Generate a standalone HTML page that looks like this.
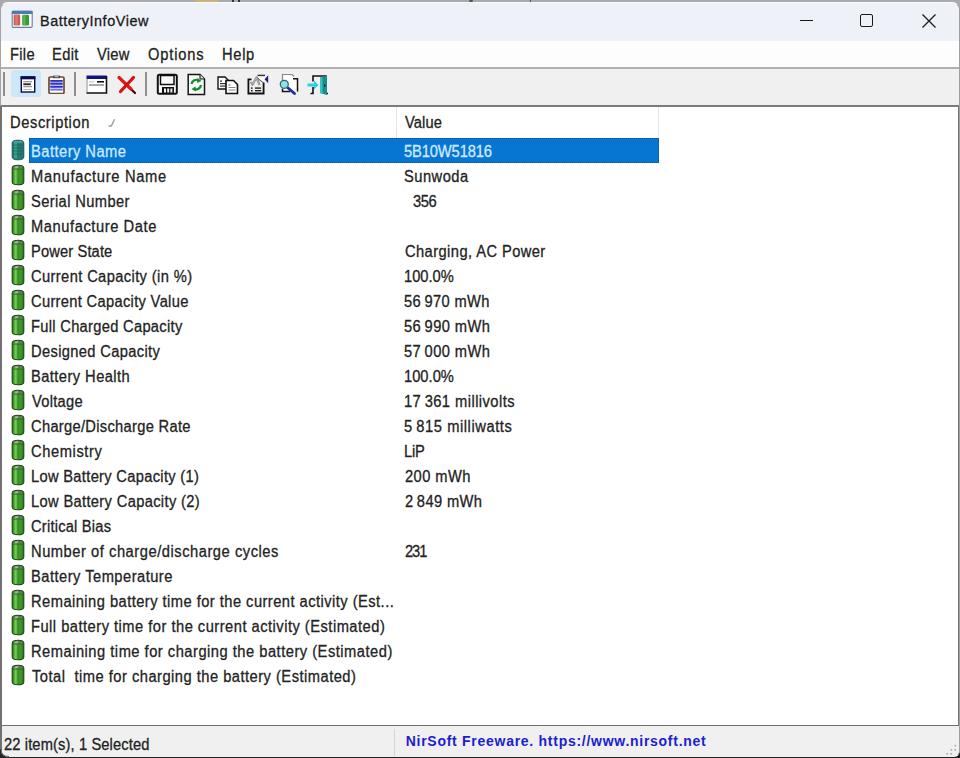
<!DOCTYPE html>
<html><head><meta charset="utf-8">
<style>
*{margin:0;padding:0;box-sizing:border-box}
html,body{width:960px;height:758px;overflow:hidden;background:#202020}
body{font-family:"Liberation Sans",sans-serif;position:relative}
.abs{position:absolute;display:block}
.t{position:absolute;white-space:pre;line-height:24px;font-family:"Liberation Sans",sans-serif;-webkit-text-stroke:0.3px currentColor}
</style></head><body>
<!-- desktop strip top -->
<div class="abs" style="left:0;top:0;width:960px;height:20px;background:#a9aaad"></div>
<div class="abs" style="left:195px;top:0;width:24px;height:2px;background:#c8b47a;border-radius:2px"></div>
<div class="abs" style="left:232px;top:0;width:2px;height:2px;background:#333"></div>
<div class="abs" style="left:238px;top:0;width:2px;height:2px;background:#333"></div>
<div class="abs" style="left:469px;top:0;width:4px;height:2px;background:#555;border-radius:2px"></div>
<div class="abs" style="left:530px;top:0;width:1px;height:2px;background:#555"></div>
<!-- window -->
<div class="abs" style="left:0;top:2px;width:960px;height:755px;background:#f0f0f0;border-radius:8px 8px 6px 6px;overflow:hidden;border:1px solid #9a9aa2;border-top-color:#fbfbfd;border-left-color:#a4a4a8;border-right-color:#a0a0a0;border-bottom-color:#f0f0f0">
  <div class="abs" style="left:0;top:0;width:958px;height:38px;background:#eef1f8"></div>
  <div class="abs" style="left:0;top:38px;width:958px;height:27px;background:#fdfdfd"></div>
  <div class="abs" style="left:0;top:64px;width:958px;height:2px;background:#b0b0b0"></div>
  <div class="abs" style="left:0;top:66px;width:958px;height:37px;background:#f0f0f0"></div>
  <div class="abs" style="left:0;top:102px;width:958px;height:2px;background:#7c7c7c"></div>
  <!-- list -->
  <div class="abs" style="left:0;top:104px;width:958px;height:619px;background:#fff;border-left:1px solid #707070;border-right:1px solid #777;border-bottom:1px solid #6e6e6e"></div>
  <!-- status -->
  <div class="abs" style="left:393px;top:726px;width:1px;height:30px;background:#d6d6d6"></div>
</div>
<div class="abs" style="left:0;top:106px;width:2px;height:645px;background:#717171"></div>
<svg class="abs" style="left:0;top:749px" width="9" height="9" viewBox="0 0 9 9"><path d="M0 0 L0 9 L9 9 L9 8 Q1 8 1 0 Z" fill="#262626"/><path d="M1 0 Q1 7.5 9 7.5" stroke="#6a6a6a" stroke-width="1" fill="none"/></svg>
<!-- header dividers -->
<div class="abs" style="left:396px;top:107px;width:1px;height:31px;background:#e5e5e5"></div>
<div class="abs" style="left:658px;top:107px;width:1px;height:31px;background:#e5e5e5"></div>
<!-- sort arrow -->
<svg class="abs" style="left:106px;top:117px" width="12" height="12" viewBox="0 0 12 12"><path d="M2.5 9 L5.3 9 L8.6 2.3" stroke="#9c9c9c" stroke-width="1.4" fill="none"/></svg>
<!-- selection -->
<div class="abs" style="left:29px;top:138px;width:630px;height:25px;background:#0676d2;outline:1px dotted #0a4f98;outline-offset:-1px"></div>

<!-- title icon -->
<svg class="abs" style="left:11px;top:10px" width="23" height="19" viewBox="0 0 23 19">
<rect x="1.2" y="1.4" width="20" height="16" rx="1.2" fill="#fbfbfb" stroke="#66809f" stroke-width="1.1"/>
<rect x="0.8" y="0.8" width="20.8" height="3.2" rx="1" fill="#4c7bb0"/>
<rect x="2.6" y="4.6" width="6.6" height="10.8" rx="1.2" fill="#cf5c55"/>
<rect x="4.2" y="5" width="2.5" height="10" fill="#dc7a70"/>
<rect x="11.2" y="4.8" width="6.8" height="10.6" rx="1.2" fill="#3a9a36"/>
<rect x="12.2" y="5" width="2.2" height="10" fill="#5ab850"/>
</svg>
<!-- caption buttons -->
<div class="abs" style="left:800px;top:20px;width:13px;height:1px;background:#1a1a1a"></div>
<div class="abs" style="left:860px;top:14px;width:13px;height:13px;border:1.7px solid #1a1a1a;border-radius:2px"></div>
<svg class="abs" style="left:921px;top:13px" width="16" height="16" viewBox="0 0 16 16"><path d="M1.5 1.5 L14.5 14.5 M14.5 1.5 L1.5 14.5" stroke="#1a1a1a" stroke-width="1.3"/></svg>

<!-- toolbar -->
<div class="abs" style="left:3px;top:72px;width:2px;height:24px;background:#8e8e8e"></div>
<div class="abs" style="left:11px;top:70px;width:30px;height:27px;background:#cce6fa;border-radius:3px"></div>
<div class="abs" style="left:74px;top:72px;width:2px;height:24px;background:#8e8e8e"></div>
<div class="abs" style="left:145px;top:72px;width:2px;height:24px;background:#8e8e8e"></div>
<!-- icon1 properties -->
<svg class="abs" style="left:20px;top:76px" width="16" height="17" viewBox="0 0 16 17">
<rect x="1.3" y="1" width="13.4" height="15" fill="#fff" stroke="#0a0a48" stroke-width="1.4"/>
<rect x="0.6" y="0.3" width="14.8" height="3" fill="#0a0a50"/>
<rect x="3.3" y="5.3" width="8.7" height="0.9" fill="#707070"/>
<rect x="3.3" y="7.3" width="7.5" height="1.9" fill="#2a2a2a"/>
<rect x="3.3" y="10.3" width="8.7" height="0.9" fill="#707070"/>
<rect x="3.3" y="13" width="8" height="0.9" fill="#b0b0b0"/>
</svg>
<!-- icon2 clipboard -->
<svg class="abs" style="left:48px;top:75px" width="17" height="19" viewBox="0 0 17 19">
<rect x="1" y="2" width="15" height="16.5" rx="1.2" fill="#fff" stroke="#6e4c2c" stroke-width="1.7"/>
<rect x="5" y="0.6" width="7" height="2.6" fill="#4a4a4a"/>
<rect x="6.5" y="1.2" width="4" height="1" fill="#ccc"/>
<rect x="2.3" y="5.2" width="12.4" height="2.4" fill="#5858e0"/>
<rect x="2.3" y="5.2" width="12.4" height="0.9" fill="#22229a"/>
<rect x="2.3" y="8.2" width="12.4" height="2.2" fill="#5a5ae6"/>
<rect x="2.3" y="8.2" width="12.4" height="0.8" fill="#2a2aa8"/>
<rect x="2.3" y="11" width="12.4" height="2.2" fill="#5a5ae6"/>
<rect x="2.3" y="11" width="12.4" height="0.8" fill="#2a2aa8"/>
<rect x="2.3" y="13.8" width="12.4" height="1.8" fill="#7070f0"/>
</svg>
<!-- icon3 window -->
<svg class="abs" style="left:86px;top:75px" width="22" height="19" viewBox="0 0 22 19">
<rect x="0.5" y="0.5" width="20" height="17" fill="#fff"/>
<rect x="0.5" y="0.5" width="20" height="3.5" fill="#101088"/>
<path d="M1 4 L1 17.5" stroke="#909090" stroke-width="1"/>
<path d="M20.5 1 L20.5 18 L0.5 18" stroke="#111" stroke-width="1.6" fill="none"/>
<rect x="11" y="6" width="7" height="1.6" fill="#111"/>
<rect x="3" y="9.5" width="15" height="1" fill="#555"/>
<rect x="3" y="6.5" width="5" height="0.8" fill="#aaa"/>
</svg>
<!-- icon4 red X -->
<svg class="abs" style="left:116px;top:75px" width="22" height="20" viewBox="0 0 22 20">
<path d="M3 2.5 L19 18" stroke="#3a0a0a" stroke-width="2.2" stroke-linecap="round"/>
<path d="M3 2.5 L15 14" stroke="#e01818" stroke-width="3.2" stroke-linecap="round"/>
<path d="M17.5 2.5 L4.5 16.5" stroke="#d41010" stroke-width="3.2" stroke-linecap="round"/>
</svg>
<!-- icon5 floppy -->
<svg class="abs" style="left:156px;top:73px" width="23" height="22" viewBox="0 0 23 22">
<rect x="1.8" y="1.8" width="19" height="19" rx="1.5" fill="#fff" stroke="#111" stroke-width="2"/>
<rect x="4.5" y="2.5" width="13.5" height="9" fill="#fafafa" stroke="#111" stroke-width="1.5"/>
<rect x="6" y="14" width="12" height="6.5" fill="#111"/>
<rect x="8" y="15.5" width="2" height="4" fill="#eee"/>
<rect x="11.2" y="15.5" width="2" height="4" fill="#eee"/>
<rect x="14.4" y="15.5" width="2" height="4" fill="#eee"/>
</svg>
<!-- icon6 refresh doc -->
<svg class="abs" style="left:187px;top:73px" width="19" height="23" viewBox="0 0 19 23">
<path d="M1.2 1.5 L13 1.5 L17.5 6 L17.5 21.5 L1.2 21.5 Z" fill="#f4fbf8" stroke="#151515" stroke-width="1.5"/>
<path d="M13 1.5 L13 6 L17.5 6" fill="#ddd" stroke="#151515" stroke-width="1"/>
<path d="M4.5 11 A5 5 0 0 1 12 7.5" stroke="#138a30" stroke-width="2.2" fill="none"/>
<path d="M10.5 5 L14.5 8 L10 10 Z" fill="#138a30"/>
<path d="M14 12 A5 5 0 0 1 7 16" stroke="#138a30" stroke-width="2.2" fill="none"/>
<path d="M8.5 13.5 L4.5 16 L9 18.5 Z" fill="#138a30"/>
</svg>
<!-- icon7 copy -->
<svg class="abs" style="left:217px;top:76px" width="22" height="19" viewBox="0 0 22 19">
<path d="M1 1 L8 1 L11 4 L11 13 L1 13 Z" fill="#fff" stroke="#111" stroke-width="1.4"/>
<rect x="3" y="4.5" width="2" height="1.2" fill="#222"/>
<rect x="3" y="7" width="6" height="1.2" fill="#333"/>
<rect x="3" y="9.5" width="6" height="1.2" fill="#333"/>
<path d="M9 4.5 L16.5 4.5 L20.5 8.5 L20.5 17.5 L9 17.5 Z" fill="#fff" stroke="#111" stroke-width="1.6"/>
<rect x="11.5" y="8.5" width="2" height="1" fill="#666"/>
<rect x="11.5" y="11" width="7" height="1" fill="#888"/>
<rect x="11.5" y="13.5" width="7" height="1" fill="#888"/>
</svg>
<!-- icon8 box with arrow -->
<svg class="abs" style="left:247px;top:74px" width="23" height="21" viewBox="0 0 23 21">
<path d="M4.5 5.3 L1.4 5.3 L1.4 19.5 L16.6 19.5 L16.6 8.5" stroke="#111" stroke-width="1.8" fill="none"/>
<path d="M10 3.5 L16.6 8.5" stroke="#222" stroke-width="1.4"/>
<path d="M10.5 1.5 L18 1.5" stroke="#333" stroke-width="1.6"/>
<path d="M10.5 2.5 L18 2.5 L16.6 8.5 L12 5 Z" fill="#fff"/>
<path d="M3.8 8 L5.5 10.5 L9.5 3.5 L12.5 11" stroke="#8a8a8a" stroke-width="2.2" fill="none" stroke-linejoin="round"/>
<path d="M4.2 8.2 L5.5 10 L9.5 3.8 L12.2 10.5" stroke="#d8d8d8" stroke-width="0.6" fill="none"/>
<path d="M21.2 1.2 L21.2 9.3 L17.6 5.2 Z" fill="#20206e"/>
<rect x="4" y="13.4" width="1.6" height="1.4" fill="#111"/>
<rect x="8" y="13.4" width="6.2" height="1.4" fill="#222"/>
<rect x="4" y="16" width="1.6" height="1.4" fill="#111"/>
<rect x="8" y="16" width="6.2" height="1.4" fill="#222"/>
</svg>
<!-- icon9 find -->
<svg class="abs" style="left:278px;top:73px" width="22" height="23" viewBox="0 0 22 23">
<path d="M4.5 1.5 L14 1.5 L19.5 6 L19.5 18.5 L4.5 18.5 Z" fill="#fff"/>
<path d="M4.5 8 L4.5 1.5 L14 1.5 L16 3.5" stroke="#888" stroke-width="1.2" fill="none"/>
<path d="M15 5.8 L19.5 5.8 L19.5 18.5 M4.5 15.5 L4.5 18.5 L12 18.5" stroke="#111" stroke-width="1.5" fill="none"/>
<path d="M9.5 14.5 L16.5 20.5" stroke="#1a2aa8" stroke-width="2.8" stroke-linecap="round"/>
<circle cx="6.3" cy="11.3" r="4" fill="#8ee4e4" stroke="#2a6a70" stroke-width="1.3"/>
</svg>
<!-- icon10 exit -->
<svg class="abs" style="left:307px;top:74px" width="23" height="22" viewBox="0 0 23 22">
<path d="M6 7.5 L6 2 L19 2 L19 19.5" stroke="#111" stroke-width="1.6" fill="none"/>
<path d="M6 13 L6 19.5 L3.5 19.5" stroke="#111" stroke-width="1.6" fill="none"/>
<path d="M19 19.5 L21 19.5" stroke="#111" stroke-width="1.6"/>
<path d="M13 3.5 L20 1.5 L20 21 L13 19 Z" fill="#1a8e8e"/>
<path d="M13 3.5 L15.5 2.8 L15.5 19.8 L13 19 Z" fill="#36c0c0"/>
<rect x="17" y="10.5" width="1.4" height="2" fill="#111"/>
<path d="M0.5 9.5 L7 9.5 L7 6.5 L11.5 11 L7 15.5 L7 12.5 L0.5 12.5 Z" fill="#2ad0e0"/>
</svg>

<svg width="0" height="0" style="position:absolute"><defs><linearGradient id="bgr" x1="0" x2="1" y1="0" y2="0"><stop offset="0" stop-color="#246414"/><stop offset="0.18" stop-color="#52ac38"/><stop offset="0.32" stop-color="#78d45a"/><stop offset="0.48" stop-color="#368f22"/><stop offset="0.75" stop-color="#43992e"/><stop offset="1" stop-color="#246e16"/></linearGradient></defs></svg><svg class="abs" style="left:11px;top:139px" width="14" height="22" viewBox="0 0 14 22">
<path d="M1.2 4 Q1.2 1.2 7 1.2 Q12.8 1.2 12.8 4 L12.8 18 Q12.8 20.8 7 20.8 Q1.2 20.8 1.2 18 Z" fill="#237a72" stroke="#155858" stroke-width="1"/>
<rect x="3" y="4" width="3" height="15" fill="#3a9e8e"/>
<rect x="3" y="2.2" width="8" height="1.6" fill="#5aa0b0"/>
<g stroke="#176060" stroke-width="0.7"><path d="M1.5 6H12.5M1.5 9H12.5M1.5 12H12.5M1.5 15H12.5"/></g>
</svg>
<svg class="abs" style="left:11px;top:164px" width="14" height="22" viewBox="0 0 14 22">
<path d="M1.2 4 Q1.2 1.2 7 1.2 Q12.8 1.2 12.8 4 L12.8 18 Q12.8 20.8 7 20.8 Q1.2 20.8 1.2 18 Z" fill="url(#bgr)" stroke="#1e4a14" stroke-width="1.1"/>
<path d="M2 4.2 Q2 2 7 2 Q12 2 12 4.2 Z" fill="#6a7468"/>
<path d="M3.5 3.6 Q4 2.6 7 2.5 L7 3.6 Z" fill="#e6ece4"/>
<path d="M1.8 5.2 H12.2" stroke="#2c6a1e" stroke-width="0.8"/>
</svg>
<svg class="abs" style="left:11px;top:189px" width="14" height="22" viewBox="0 0 14 22">
<path d="M1.2 4 Q1.2 1.2 7 1.2 Q12.8 1.2 12.8 4 L12.8 18 Q12.8 20.8 7 20.8 Q1.2 20.8 1.2 18 Z" fill="url(#bgr)" stroke="#1e4a14" stroke-width="1.1"/>
<path d="M2 4.2 Q2 2 7 2 Q12 2 12 4.2 Z" fill="#6a7468"/>
<path d="M3.5 3.6 Q4 2.6 7 2.5 L7 3.6 Z" fill="#e6ece4"/>
<path d="M1.8 5.2 H12.2" stroke="#2c6a1e" stroke-width="0.8"/>
</svg>
<svg class="abs" style="left:11px;top:214px" width="14" height="22" viewBox="0 0 14 22">
<path d="M1.2 4 Q1.2 1.2 7 1.2 Q12.8 1.2 12.8 4 L12.8 18 Q12.8 20.8 7 20.8 Q1.2 20.8 1.2 18 Z" fill="url(#bgr)" stroke="#1e4a14" stroke-width="1.1"/>
<path d="M2 4.2 Q2 2 7 2 Q12 2 12 4.2 Z" fill="#6a7468"/>
<path d="M3.5 3.6 Q4 2.6 7 2.5 L7 3.6 Z" fill="#e6ece4"/>
<path d="M1.8 5.2 H12.2" stroke="#2c6a1e" stroke-width="0.8"/>
</svg>
<svg class="abs" style="left:11px;top:239px" width="14" height="22" viewBox="0 0 14 22">
<path d="M1.2 4 Q1.2 1.2 7 1.2 Q12.8 1.2 12.8 4 L12.8 18 Q12.8 20.8 7 20.8 Q1.2 20.8 1.2 18 Z" fill="url(#bgr)" stroke="#1e4a14" stroke-width="1.1"/>
<path d="M2 4.2 Q2 2 7 2 Q12 2 12 4.2 Z" fill="#6a7468"/>
<path d="M3.5 3.6 Q4 2.6 7 2.5 L7 3.6 Z" fill="#e6ece4"/>
<path d="M1.8 5.2 H12.2" stroke="#2c6a1e" stroke-width="0.8"/>
</svg>
<svg class="abs" style="left:11px;top:264px" width="14" height="22" viewBox="0 0 14 22">
<path d="M1.2 4 Q1.2 1.2 7 1.2 Q12.8 1.2 12.8 4 L12.8 18 Q12.8 20.8 7 20.8 Q1.2 20.8 1.2 18 Z" fill="url(#bgr)" stroke="#1e4a14" stroke-width="1.1"/>
<path d="M2 4.2 Q2 2 7 2 Q12 2 12 4.2 Z" fill="#6a7468"/>
<path d="M3.5 3.6 Q4 2.6 7 2.5 L7 3.6 Z" fill="#e6ece4"/>
<path d="M1.8 5.2 H12.2" stroke="#2c6a1e" stroke-width="0.8"/>
</svg>
<svg class="abs" style="left:11px;top:289px" width="14" height="22" viewBox="0 0 14 22">
<path d="M1.2 4 Q1.2 1.2 7 1.2 Q12.8 1.2 12.8 4 L12.8 18 Q12.8 20.8 7 20.8 Q1.2 20.8 1.2 18 Z" fill="url(#bgr)" stroke="#1e4a14" stroke-width="1.1"/>
<path d="M2 4.2 Q2 2 7 2 Q12 2 12 4.2 Z" fill="#6a7468"/>
<path d="M3.5 3.6 Q4 2.6 7 2.5 L7 3.6 Z" fill="#e6ece4"/>
<path d="M1.8 5.2 H12.2" stroke="#2c6a1e" stroke-width="0.8"/>
</svg>
<svg class="abs" style="left:11px;top:314px" width="14" height="22" viewBox="0 0 14 22">
<path d="M1.2 4 Q1.2 1.2 7 1.2 Q12.8 1.2 12.8 4 L12.8 18 Q12.8 20.8 7 20.8 Q1.2 20.8 1.2 18 Z" fill="url(#bgr)" stroke="#1e4a14" stroke-width="1.1"/>
<path d="M2 4.2 Q2 2 7 2 Q12 2 12 4.2 Z" fill="#6a7468"/>
<path d="M3.5 3.6 Q4 2.6 7 2.5 L7 3.6 Z" fill="#e6ece4"/>
<path d="M1.8 5.2 H12.2" stroke="#2c6a1e" stroke-width="0.8"/>
</svg>
<svg class="abs" style="left:11px;top:339px" width="14" height="22" viewBox="0 0 14 22">
<path d="M1.2 4 Q1.2 1.2 7 1.2 Q12.8 1.2 12.8 4 L12.8 18 Q12.8 20.8 7 20.8 Q1.2 20.8 1.2 18 Z" fill="url(#bgr)" stroke="#1e4a14" stroke-width="1.1"/>
<path d="M2 4.2 Q2 2 7 2 Q12 2 12 4.2 Z" fill="#6a7468"/>
<path d="M3.5 3.6 Q4 2.6 7 2.5 L7 3.6 Z" fill="#e6ece4"/>
<path d="M1.8 5.2 H12.2" stroke="#2c6a1e" stroke-width="0.8"/>
</svg>
<svg class="abs" style="left:11px;top:364px" width="14" height="22" viewBox="0 0 14 22">
<path d="M1.2 4 Q1.2 1.2 7 1.2 Q12.8 1.2 12.8 4 L12.8 18 Q12.8 20.8 7 20.8 Q1.2 20.8 1.2 18 Z" fill="url(#bgr)" stroke="#1e4a14" stroke-width="1.1"/>
<path d="M2 4.2 Q2 2 7 2 Q12 2 12 4.2 Z" fill="#6a7468"/>
<path d="M3.5 3.6 Q4 2.6 7 2.5 L7 3.6 Z" fill="#e6ece4"/>
<path d="M1.8 5.2 H12.2" stroke="#2c6a1e" stroke-width="0.8"/>
</svg>
<svg class="abs" style="left:11px;top:389px" width="14" height="22" viewBox="0 0 14 22">
<path d="M1.2 4 Q1.2 1.2 7 1.2 Q12.8 1.2 12.8 4 L12.8 18 Q12.8 20.8 7 20.8 Q1.2 20.8 1.2 18 Z" fill="url(#bgr)" stroke="#1e4a14" stroke-width="1.1"/>
<path d="M2 4.2 Q2 2 7 2 Q12 2 12 4.2 Z" fill="#6a7468"/>
<path d="M3.5 3.6 Q4 2.6 7 2.5 L7 3.6 Z" fill="#e6ece4"/>
<path d="M1.8 5.2 H12.2" stroke="#2c6a1e" stroke-width="0.8"/>
</svg>
<svg class="abs" style="left:11px;top:414px" width="14" height="22" viewBox="0 0 14 22">
<path d="M1.2 4 Q1.2 1.2 7 1.2 Q12.8 1.2 12.8 4 L12.8 18 Q12.8 20.8 7 20.8 Q1.2 20.8 1.2 18 Z" fill="url(#bgr)" stroke="#1e4a14" stroke-width="1.1"/>
<path d="M2 4.2 Q2 2 7 2 Q12 2 12 4.2 Z" fill="#6a7468"/>
<path d="M3.5 3.6 Q4 2.6 7 2.5 L7 3.6 Z" fill="#e6ece4"/>
<path d="M1.8 5.2 H12.2" stroke="#2c6a1e" stroke-width="0.8"/>
</svg>
<svg class="abs" style="left:11px;top:439px" width="14" height="22" viewBox="0 0 14 22">
<path d="M1.2 4 Q1.2 1.2 7 1.2 Q12.8 1.2 12.8 4 L12.8 18 Q12.8 20.8 7 20.8 Q1.2 20.8 1.2 18 Z" fill="url(#bgr)" stroke="#1e4a14" stroke-width="1.1"/>
<path d="M2 4.2 Q2 2 7 2 Q12 2 12 4.2 Z" fill="#6a7468"/>
<path d="M3.5 3.6 Q4 2.6 7 2.5 L7 3.6 Z" fill="#e6ece4"/>
<path d="M1.8 5.2 H12.2" stroke="#2c6a1e" stroke-width="0.8"/>
</svg>
<svg class="abs" style="left:11px;top:464px" width="14" height="22" viewBox="0 0 14 22">
<path d="M1.2 4 Q1.2 1.2 7 1.2 Q12.8 1.2 12.8 4 L12.8 18 Q12.8 20.8 7 20.8 Q1.2 20.8 1.2 18 Z" fill="url(#bgr)" stroke="#1e4a14" stroke-width="1.1"/>
<path d="M2 4.2 Q2 2 7 2 Q12 2 12 4.2 Z" fill="#6a7468"/>
<path d="M3.5 3.6 Q4 2.6 7 2.5 L7 3.6 Z" fill="#e6ece4"/>
<path d="M1.8 5.2 H12.2" stroke="#2c6a1e" stroke-width="0.8"/>
</svg>
<svg class="abs" style="left:11px;top:489px" width="14" height="22" viewBox="0 0 14 22">
<path d="M1.2 4 Q1.2 1.2 7 1.2 Q12.8 1.2 12.8 4 L12.8 18 Q12.8 20.8 7 20.8 Q1.2 20.8 1.2 18 Z" fill="url(#bgr)" stroke="#1e4a14" stroke-width="1.1"/>
<path d="M2 4.2 Q2 2 7 2 Q12 2 12 4.2 Z" fill="#6a7468"/>
<path d="M3.5 3.6 Q4 2.6 7 2.5 L7 3.6 Z" fill="#e6ece4"/>
<path d="M1.8 5.2 H12.2" stroke="#2c6a1e" stroke-width="0.8"/>
</svg>
<svg class="abs" style="left:11px;top:514px" width="14" height="22" viewBox="0 0 14 22">
<path d="M1.2 4 Q1.2 1.2 7 1.2 Q12.8 1.2 12.8 4 L12.8 18 Q12.8 20.8 7 20.8 Q1.2 20.8 1.2 18 Z" fill="url(#bgr)" stroke="#1e4a14" stroke-width="1.1"/>
<path d="M2 4.2 Q2 2 7 2 Q12 2 12 4.2 Z" fill="#6a7468"/>
<path d="M3.5 3.6 Q4 2.6 7 2.5 L7 3.6 Z" fill="#e6ece4"/>
<path d="M1.8 5.2 H12.2" stroke="#2c6a1e" stroke-width="0.8"/>
</svg>
<svg class="abs" style="left:11px;top:539px" width="14" height="22" viewBox="0 0 14 22">
<path d="M1.2 4 Q1.2 1.2 7 1.2 Q12.8 1.2 12.8 4 L12.8 18 Q12.8 20.8 7 20.8 Q1.2 20.8 1.2 18 Z" fill="url(#bgr)" stroke="#1e4a14" stroke-width="1.1"/>
<path d="M2 4.2 Q2 2 7 2 Q12 2 12 4.2 Z" fill="#6a7468"/>
<path d="M3.5 3.6 Q4 2.6 7 2.5 L7 3.6 Z" fill="#e6ece4"/>
<path d="M1.8 5.2 H12.2" stroke="#2c6a1e" stroke-width="0.8"/>
</svg>
<svg class="abs" style="left:11px;top:564px" width="14" height="22" viewBox="0 0 14 22">
<path d="M1.2 4 Q1.2 1.2 7 1.2 Q12.8 1.2 12.8 4 L12.8 18 Q12.8 20.8 7 20.8 Q1.2 20.8 1.2 18 Z" fill="url(#bgr)" stroke="#1e4a14" stroke-width="1.1"/>
<path d="M2 4.2 Q2 2 7 2 Q12 2 12 4.2 Z" fill="#6a7468"/>
<path d="M3.5 3.6 Q4 2.6 7 2.5 L7 3.6 Z" fill="#e6ece4"/>
<path d="M1.8 5.2 H12.2" stroke="#2c6a1e" stroke-width="0.8"/>
</svg>
<svg class="abs" style="left:11px;top:589px" width="14" height="22" viewBox="0 0 14 22">
<path d="M1.2 4 Q1.2 1.2 7 1.2 Q12.8 1.2 12.8 4 L12.8 18 Q12.8 20.8 7 20.8 Q1.2 20.8 1.2 18 Z" fill="url(#bgr)" stroke="#1e4a14" stroke-width="1.1"/>
<path d="M2 4.2 Q2 2 7 2 Q12 2 12 4.2 Z" fill="#6a7468"/>
<path d="M3.5 3.6 Q4 2.6 7 2.5 L7 3.6 Z" fill="#e6ece4"/>
<path d="M1.8 5.2 H12.2" stroke="#2c6a1e" stroke-width="0.8"/>
</svg>
<svg class="abs" style="left:11px;top:614px" width="14" height="22" viewBox="0 0 14 22">
<path d="M1.2 4 Q1.2 1.2 7 1.2 Q12.8 1.2 12.8 4 L12.8 18 Q12.8 20.8 7 20.8 Q1.2 20.8 1.2 18 Z" fill="url(#bgr)" stroke="#1e4a14" stroke-width="1.1"/>
<path d="M2 4.2 Q2 2 7 2 Q12 2 12 4.2 Z" fill="#6a7468"/>
<path d="M3.5 3.6 Q4 2.6 7 2.5 L7 3.6 Z" fill="#e6ece4"/>
<path d="M1.8 5.2 H12.2" stroke="#2c6a1e" stroke-width="0.8"/>
</svg>
<svg class="abs" style="left:11px;top:639px" width="14" height="22" viewBox="0 0 14 22">
<path d="M1.2 4 Q1.2 1.2 7 1.2 Q12.8 1.2 12.8 4 L12.8 18 Q12.8 20.8 7 20.8 Q1.2 20.8 1.2 18 Z" fill="url(#bgr)" stroke="#1e4a14" stroke-width="1.1"/>
<path d="M2 4.2 Q2 2 7 2 Q12 2 12 4.2 Z" fill="#6a7468"/>
<path d="M3.5 3.6 Q4 2.6 7 2.5 L7 3.6 Z" fill="#e6ece4"/>
<path d="M1.8 5.2 H12.2" stroke="#2c6a1e" stroke-width="0.8"/>
</svg>
<svg class="abs" style="left:11px;top:664px" width="14" height="22" viewBox="0 0 14 22">
<path d="M1.2 4 Q1.2 1.2 7 1.2 Q12.8 1.2 12.8 4 L12.8 18 Q12.8 20.8 7 20.8 Q1.2 20.8 1.2 18 Z" fill="url(#bgr)" stroke="#1e4a14" stroke-width="1.1"/>
<path d="M2 4.2 Q2 2 7 2 Q12 2 12 4.2 Z" fill="#6a7468"/>
<path d="M3.5 3.6 Q4 2.6 7 2.5 L7 3.6 Z" fill="#e6ece4"/>
<path d="M1.8 5.2 H12.2" stroke="#2c6a1e" stroke-width="0.8"/>
</svg>
<div class="t" style="left:39.9px;top:9px;font-size:15.5px;font-weight:400;letter-spacing:0.588px;color:#1a1a1a;transform:scaleX(0.93);transform-origin:0 0;-webkit-text-stroke:0.3px currentColor">BatteryInfoView</div>
<div class="t" style="left:9.6px;top:43px;font-size:15.8px;font-weight:400;letter-spacing:0.333px;color:#232323;transform:scaleX(0.93);transform-origin:0 0;-webkit-text-stroke:0.3px currentColor">File</div>
<div class="t" style="left:51.8px;top:43px;font-size:15.8px;font-weight:400;letter-spacing:0.401px;color:#232323;transform:scaleX(0.93);transform-origin:0 0;-webkit-text-stroke:0.3px currentColor">Edit</div>
<div class="t" style="left:97.0px;top:43px;font-size:15.8px;font-weight:400;letter-spacing:0.280px;color:#232323;transform:scaleX(0.93);transform-origin:0 0;-webkit-text-stroke:0.3px currentColor">View</div>
<div class="t" style="left:148.1px;top:43px;font-size:15.8px;font-weight:400;letter-spacing:0.880px;color:#232323;transform:scaleX(0.93);transform-origin:0 0;-webkit-text-stroke:0.3px currentColor">Options</div>
<div class="t" style="left:222.0px;top:43px;font-size:15.8px;font-weight:400;letter-spacing:0.742px;color:#232323;transform:scaleX(0.93);transform-origin:0 0;-webkit-text-stroke:0.3px currentColor">Help</div>
<div class="t" style="left:9.9px;top:111px;font-size:15.8px;font-weight:400;letter-spacing:0.633px;color:#232323;transform:scaleX(0.93);transform-origin:0 0;-webkit-text-stroke:0.3px currentColor">Description</div>
<div class="t" style="left:404.6px;top:111px;font-size:15.8px;font-weight:400;letter-spacing:0.102px;color:#232323;transform:scaleX(0.93);transform-origin:0 0;-webkit-text-stroke:0.3px currentColor">Value</div>
<div class="t" style="left:31.1px;top:140px;font-size:15.8px;font-weight:400;letter-spacing:0.503px;color:#cfeaff;transform:scaleX(0.93);transform-origin:0 0;-webkit-text-stroke:0.3px currentColor">Battery Name</div>
<div class="t" style="left:31.1px;top:165px;font-size:15.8px;font-weight:400;letter-spacing:0.732px;color:#232323;transform:scaleX(0.93);transform-origin:0 0;-webkit-text-stroke:0.3px currentColor">Manufacture Name</div>
<div class="t" style="left:31.1px;top:190px;font-size:15.8px;font-weight:400;letter-spacing:0.403px;color:#232323;transform:scaleX(0.93);transform-origin:0 0;-webkit-text-stroke:0.3px currentColor">Serial Number</div>
<div class="t" style="left:31.1px;top:215px;font-size:15.8px;font-weight:400;letter-spacing:0.615px;color:#232323;transform:scaleX(0.93);transform-origin:0 0;-webkit-text-stroke:0.3px currentColor">Manufacture Date</div>
<div class="t" style="left:31.1px;top:240px;font-size:15.8px;font-weight:400;letter-spacing:0.134px;color:#232323;transform:scaleX(0.93);transform-origin:0 0;-webkit-text-stroke:0.3px currentColor">Power State</div>
<div class="t" style="left:31.1px;top:265px;font-size:15.8px;font-weight:400;letter-spacing:0.411px;color:#232323;transform:scaleX(0.93);transform-origin:0 0;-webkit-text-stroke:0.3px currentColor">Current Capacity (in %)</div>
<div class="t" style="left:31.1px;top:290px;font-size:15.8px;font-weight:400;letter-spacing:0.336px;color:#232323;transform:scaleX(0.93);transform-origin:0 0;-webkit-text-stroke:0.3px currentColor">Current Capacity Value</div>
<div class="t" style="left:31.1px;top:315px;font-size:15.8px;font-weight:400;letter-spacing:0.318px;color:#232323;transform:scaleX(0.93);transform-origin:0 0;-webkit-text-stroke:0.3px currentColor">Full Charged Capacity</div>
<div class="t" style="left:31.1px;top:340px;font-size:15.8px;font-weight:400;letter-spacing:0.366px;color:#232323;transform:scaleX(0.93);transform-origin:0 0;-webkit-text-stroke:0.3px currentColor">Designed Capacity</div>
<div class="t" style="left:31.1px;top:365px;font-size:15.8px;font-weight:400;letter-spacing:0.468px;color:#232323;transform:scaleX(0.93);transform-origin:0 0;-webkit-text-stroke:0.3px currentColor">Battery Health</div>
<div class="t" style="left:32.0px;top:390px;font-size:15.8px;font-weight:400;letter-spacing:0.294px;color:#232323;transform:scaleX(0.93);transform-origin:0 0;-webkit-text-stroke:0.3px currentColor">Voltage</div>
<div class="t" style="left:31.1px;top:415px;font-size:15.8px;font-weight:400;letter-spacing:0.322px;color:#232323;transform:scaleX(0.93);transform-origin:0 0;-webkit-text-stroke:0.3px currentColor">Charge/Discharge Rate</div>
<div class="t" style="left:31.1px;top:440px;font-size:15.8px;font-weight:400;letter-spacing:0.632px;color:#232323;transform:scaleX(0.93);transform-origin:0 0;-webkit-text-stroke:0.3px currentColor">Chemistry</div>
<div class="t" style="left:31.1px;top:465px;font-size:15.8px;font-weight:400;letter-spacing:0.331px;color:#232323;transform:scaleX(0.93);transform-origin:0 0;-webkit-text-stroke:0.3px currentColor">Low Battery Capacity (1)</div>
<div class="t" style="left:31.1px;top:490px;font-size:15.8px;font-weight:400;letter-spacing:0.363px;color:#232323;transform:scaleX(0.93);transform-origin:0 0;-webkit-text-stroke:0.3px currentColor">Low Battery Capacity (2)</div>
<div class="t" style="left:31.1px;top:515px;font-size:15.8px;font-weight:400;letter-spacing:0.219px;color:#232323;transform:scaleX(0.93);transform-origin:0 0;-webkit-text-stroke:0.3px currentColor">Critical Bias</div>
<div class="t" style="left:31.1px;top:540px;font-size:15.8px;font-weight:400;letter-spacing:0.575px;color:#232323;transform:scaleX(0.93);transform-origin:0 0;-webkit-text-stroke:0.3px currentColor">Number of charge/discharge cycles</div>
<div class="t" style="left:31.1px;top:565px;font-size:15.8px;font-weight:400;letter-spacing:0.512px;color:#232323;transform:scaleX(0.93);transform-origin:0 0;-webkit-text-stroke:0.3px currentColor">Battery Temperature</div>
<div class="t" style="left:31.1px;top:590px;font-size:15.8px;font-weight:400;letter-spacing:0.493px;color:#232323;transform:scaleX(0.93);transform-origin:0 0;-webkit-text-stroke:0.3px currentColor">Remaining battery time for the current activity (Est...</div>
<div class="t" style="left:31.1px;top:615px;font-size:15.8px;font-weight:400;letter-spacing:0.519px;color:#232323;transform:scaleX(0.93);transform-origin:0 0;-webkit-text-stroke:0.3px currentColor">Full battery time for the current activity (Estimated)</div>
<div class="t" style="left:31.1px;top:640px;font-size:15.8px;font-weight:400;letter-spacing:0.535px;color:#232323;transform:scaleX(0.93);transform-origin:0 0;-webkit-text-stroke:0.3px currentColor">Remaining time for charging the battery (Estimated)</div>
<div class="t" style="left:32.0px;top:665px;font-size:15.8px;font-weight:400;letter-spacing:0.517px;color:#232323;transform:scaleX(0.93);transform-origin:0 0;-webkit-text-stroke:0.3px currentColor">Total  time for charging the battery (Estimated)</div>
<div class="t" style="left:404.4px;top:140px;font-size:15.8px;font-weight:400;letter-spacing:-0.122px;color:#cfeaff;transform:scaleX(0.93);transform-origin:0 0;-webkit-text-stroke:0.3px currentColor">5B10W51816</div>
<div class="t" style="left:404.1px;top:165px;font-size:15.8px;font-weight:400;letter-spacing:0.511px;color:#232323;transform:scaleX(0.93);transform-origin:0 0;-webkit-text-stroke:0.3px currentColor">Sunwoda</div>
<div class="t" style="left:412.5px;top:190px;font-size:15.8px;font-weight:400;letter-spacing:-0.473px;color:#232323;transform:scaleX(0.93);transform-origin:0 0;-webkit-text-stroke:0.3px currentColor">356</div>
<div class="t" style="left:404.9px;top:240px;font-size:15.8px;font-weight:400;letter-spacing:0.452px;color:#232323;transform:scaleX(0.93);transform-origin:0 0;-webkit-text-stroke:0.3px currentColor">Charging, AC Power</div>
<div class="t" style="left:404.1px;top:265px;font-size:15.8px;font-weight:400;letter-spacing:-0.013px;color:#232323;transform:scaleX(0.93);transform-origin:0 0;-webkit-text-stroke:0.3px currentColor">100.0%</div>
<div class="t" style="left:404.1px;top:290px;font-size:15.8px;font-weight:400;letter-spacing:0.393px;color:#232323;transform:scaleX(0.93);transform-origin:0 0;-webkit-text-stroke:0.3px currentColor">56 970 mWh</div>
<div class="t" style="left:404.1px;top:315px;font-size:15.8px;font-weight:400;letter-spacing:0.453px;color:#232323;transform:scaleX(0.93);transform-origin:0 0;-webkit-text-stroke:0.3px currentColor">56 990 mWh</div>
<div class="t" style="left:404.1px;top:340px;font-size:15.8px;font-weight:400;letter-spacing:0.453px;color:#232323;transform:scaleX(0.93);transform-origin:0 0;-webkit-text-stroke:0.3px currentColor">57 000 mWh</div>
<div class="t" style="left:404.1px;top:365px;font-size:15.8px;font-weight:400;letter-spacing:0.009px;color:#232323;transform:scaleX(0.93);transform-origin:0 0;-webkit-text-stroke:0.3px currentColor">100.0%</div>
<div class="t" style="left:404.1px;top:390px;font-size:15.8px;font-weight:400;letter-spacing:0.484px;color:#232323;transform:scaleX(0.93);transform-origin:0 0;-webkit-text-stroke:0.3px currentColor">17 361 millivolts</div>
<div class="t" style="left:404.1px;top:415px;font-size:15.8px;font-weight:400;letter-spacing:0.613px;color:#232323;transform:scaleX(0.93);transform-origin:0 0;-webkit-text-stroke:0.3px currentColor">5 815 milliwatts</div>
<div class="t" style="left:404.1px;top:440px;font-size:15.8px;font-weight:400;letter-spacing:-0.285px;color:#232323;transform:scaleX(0.93);transform-origin:0 0;-webkit-text-stroke:0.3px currentColor">LiP</div>
<div class="t" style="left:405.0px;top:465px;font-size:15.8px;font-weight:400;letter-spacing:0.464px;color:#232323;transform:scaleX(0.93);transform-origin:0 0;-webkit-text-stroke:0.3px currentColor">200 mWh</div>
<div class="t" style="left:405.0px;top:490px;font-size:15.8px;font-weight:400;letter-spacing:0.407px;color:#232323;transform:scaleX(0.93);transform-origin:0 0;-webkit-text-stroke:0.3px currentColor">2 849 mWh</div>
<div class="t" style="left:405.0px;top:540px;font-size:15.8px;font-weight:400;letter-spacing:-1.172px;color:#232323;transform:scaleX(0.93);transform-origin:0 0;-webkit-text-stroke:0.3px currentColor">231</div>
<div class="t" style="left:4.2px;top:733px;font-size:15.8px;font-weight:400;letter-spacing:0.129px;color:#232323;transform:scaleX(0.93);transform-origin:0 0;-webkit-text-stroke:0.3px currentColor">22 item(s), 1 Selected</div>
<div class="t" style="left:405.7px;top:729px;font-size:14px;font-weight:700;letter-spacing:0.727px;color:#1d1dd0;transform:scaleX(1.0);transform-origin:0 0;-webkit-text-stroke:0px currentColor">NirSoft Freeware. https://www.nirsoft.net</div>
<!-- size grip -->
<svg class="abs" style="left:944px;top:742px" width="14" height="14" viewBox="0 0 14 14"><g fill="#a8a8a8"><rect x="10.5" y="2.8" width="1.6" height="1.6"/><rect x="6.5" y="7" width="1.6" height="1.6"/><rect x="10.5" y="7" width="1.6" height="1.6"/><rect x="2.5" y="11" width="1.6" height="1.6"/><rect x="6.5" y="11" width="1.6" height="1.6"/></g></svg>
</body></html>
